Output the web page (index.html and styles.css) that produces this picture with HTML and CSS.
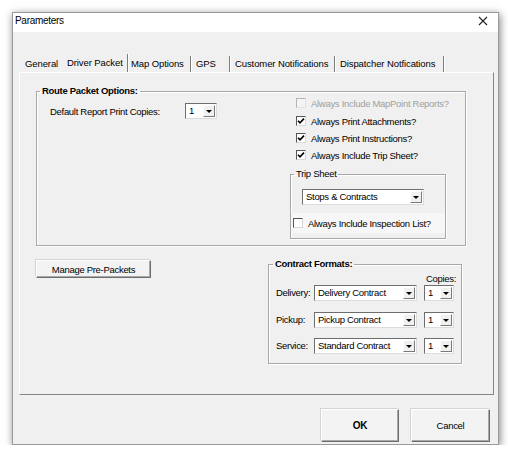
FILE: index.html
```html
<!DOCTYPE html>
<html>
<head>
<meta charset="utf-8">
<title>Parameters</title>
<link rel="stylesheet" href="styles.css">
</head>
<body>
<div class="dialog">
  <div class="titlebar">
    <span class="title">Parameters</span>
    <svg class="close" width="10" height="10" viewBox="0 0 10 10"><path d="M1 1L9 9M9 1L1 9" stroke="#222" stroke-width="1.1" fill="none"/></svg>
  </div>
  <div class="body">
    <div class="tabs">
      <div class="tab t-general">General</div>
      <div class="tab t-driver active">Driver Packet</div>
      <div class="tab t-map">Map Options</div>
      <div class="tab t-gps">GPS</div>
      <div class="tab t-cust">Customer Notifications</div>
      <div class="tab t-disp">Dispatcher Notfications</div>
    </div>
    <div class="page">
      <fieldset class="group route">
        <legend>Route Packet Options:</legend>
        <div class="route-cols">
          <div class="route-left">
            <span class="copies-label">Default Report Print Copies:</span>
            <div class="combo c-num"><span class="combo-text">1</span><span class="combo-btn"><i class="arrow"></i></span></div>
          </div>
          <div class="route-right">
            <div class="chk-row disabled first"><span class="chk"></span><span>Always Include MapPoint Reports?</span></div>
            <div class="chk-row"><span class="chk"><svg width="8" height="8" viewBox="0 0 8 8"><path d="M1 3.8L3 5.9L7 1.6" stroke="#000" stroke-width="1.6" fill="none"/></svg></span><span>Always Print Attachments?</span></div>
            <div class="chk-row"><span class="chk"><svg width="8" height="8" viewBox="0 0 8 8"><path d="M1 3.8L3 5.9L7 1.6" stroke="#000" stroke-width="1.6" fill="none"/></svg></span><span>Always Print Instructions?</span></div>
            <div class="chk-row"><span class="chk"><svg width="8" height="8" viewBox="0 0 8 8"><path d="M1 3.8L3 5.9L7 1.6" stroke="#000" stroke-width="1.6" fill="none"/></svg></span><span>Always Include Trip Sheet?</span></div>
            <fieldset class="group trip">
              <legend>Trip Sheet</legend>
              <div class="combo c-trip"><span class="combo-text">Stops &amp; Contracts</span><span class="combo-btn"><i class="arrow"></i></span></div>
              <div class="chk-row inspect"><span class="chk"></span><span>Always Include Inspection List?</span></div>
            </fieldset>
          </div>
        </div>
      </fieldset>
      <div class="lower">
        <button class="btn manage">Manage Pre-Packets</button>
        <fieldset class="group contract">
          <legend>Contract Formats:</legend>
          <div class="copies-head">Copies:</div>
          <div class="cf-row">
            <span class="cf-label">Delivery:</span>
            <div class="combo c-contract"><span class="combo-text">Delivery Contract</span><span class="combo-btn"><i class="arrow"></i></span></div>
            <div class="combo c-copies"><span class="combo-text">1</span><span class="combo-btn"><i class="arrow"></i></span></div>
          </div>
          <div class="cf-row r2">
            <span class="cf-label">Pickup:</span>
            <div class="combo c-contract"><span class="combo-text">Pickup Contract</span><span class="combo-btn"><i class="arrow"></i></span></div>
            <div class="combo c-copies"><span class="combo-text">1</span><span class="combo-btn"><i class="arrow"></i></span></div>
          </div>
          <div class="cf-row r3">
            <span class="cf-label">Service:</span>
            <div class="combo c-contract"><span class="combo-text">Standard Contract</span><span class="combo-btn"><i class="arrow"></i></span></div>
            <div class="combo c-copies"><span class="combo-text">1</span><span class="combo-btn"><i class="arrow"></i></span></div>
          </div>
        </fieldset>
      </div>
    </div>
    <div class="footer">
      <button class="btn big ok">OK</button>
      <button class="btn big cancel">Cancel</button>
    </div>
  </div>
</div>
</body>
</html>
```

FILE: styles.css
```css
html, body {
  margin: 0;
  padding: 0;
  background: #ffffff;
}
body {
  font-family: "Liberation Sans", Arial, sans-serif;
  font-size: 9.5px;
  letter-spacing: -0.3px;
  color: #000;
  padding: 12px 0 0 12px;
}
.dialog {
  width: 487px;
  height: 433px;
  box-sizing: border-box;
  border: 1px solid #9a9a9a;
  background: #f0f0f0;
  box-shadow: 1px 2px 8px rgba(0, 0, 0, 0.5);
  display: flex;
  flex-direction: column;
}
.titlebar {
  height: 19px;
  background: #ffffff;
  display: flex;
  align-items: flex-start;
  justify-content: space-between;
  padding-left: 2px;
  padding-right: 10px;
}
.title {
  line-height: 15px;
  font-size: 10px;
}
.close {
  margin-top: 3px;
}
.body {
  flex: 1;
  display: flex;
  flex-direction: column;
}
.tabs {
  margin-top: 22px;
  margin-left: 6px;
  height: 18px;
  display: flex;
  align-items: flex-end;
  letter-spacing: -0.1px;
}
.tab {
  height: 16px;
  line-height: 15px;
  box-sizing: border-box;
  padding-left: 5px;
  border-right: 1px solid #7c7c7c;
  box-shadow: 1px 0 0 #ffffff;
  white-space: nowrap;
}
.tab.active {
  height: 18px;
  padding-top: 1px;
}
.t-general { width: 43px; padding-left: 6px; border-right: none; box-shadow: none; }
.t-driver { width: 66px; }
.t-map { width: 63px; padding-left: 3px; }
.t-gps { width: 39px; }
.t-cust { width: 105px; }
.t-disp { width: 109px; }
.page {
  margin-left: 6px;
  width: 475px;
  height: 323px;
  box-sizing: border-box;
  border: 1px solid;
  border-color: #ffffff #858585 #858585 #ffffff;
  padding: 13px 0 0 16px;
}
fieldset.group {
  margin: 0;
  min-width: 0;
  border: 1px solid #a8a8a8;
  box-shadow: 1px 1px 0 #ffffff, inset 1px 1px 0 #ffffff;
}
fieldset.group > legend {
  padding: 0 2px;
  margin-left: 3px;
  line-height: 10px;
  font-weight: bold;
}
fieldset.route > legend {
  margin-left: -10px;
}
fieldset.contract > legend {
  margin-left: -3px;
}
fieldset.trip > legend {
  font-weight: normal;
}
.route {
  width: 430px;
  box-sizing: border-box;
  padding: 0 19px 6px 13px;
}
.route-cols {
  display: flex;
  align-items: flex-start;
}
.route-left {
  width: 240px;
  margin-top: 7px;
  height: 16px;
  display: flex;
  align-items: center;
}
.copies-label {
  width: 135px;
}
.c-num { width: 32px; }
.route-right {
  width: 156px;
  display: flex;
  flex-direction: column;
}
.chk-row {
  height: 14px;
  display: flex;
  align-items: center;
  gap: 5px;
  padding-left: 6px;
  margin-bottom: 3px;
  white-space: nowrap;
}
.chk-row.first {
  margin-bottom: 4px;
}
.chk {
  width: 10px;
  height: 10px;
  box-sizing: border-box;
  background: #ffffff;
  border: 1px solid;
  border-color: #555555 #d8d8d8 #d8d8d8 #555555;
  display: flex;
  align-items: center;
  justify-content: center;
  flex: none;
}
.disabled {
  color: #a0a0a0;
}
.disabled .chk {
  background: #f4f4f4;
  border-color: #b4b4b4 #e2e2e2 #e2e2e2 #b4b4b4;
}
.trip {
  margin-top: 4px !important;
  padding: 0 0 5px 0;
}
.c-trip {
  width: 122px;
  margin: 10px 0 0 11px;
}
.chk-row.inspect {
  height: 20px;
  margin: 8px 0 0 0;
  padding-left: 2px;
  background: #f7f7f7;
}
.combo {
  height: 16px;
  box-sizing: border-box;
  display: flex;
  align-items: center;
  background: #ffffff;
  border: 1px solid;
  border-color: #6e6e6e #dcdcdc #dcdcdc #6e6e6e;
  flex: none;
}
.combo-text {
  flex: 1;
  padding-left: 3px;
  line-height: 14px;
  white-space: nowrap;
  overflow: hidden;
}
.combo-btn {
  width: 12px;
  height: 12px;
  margin-right: 1px;
  box-sizing: border-box;
  background: #f0f0f0;
  border: 1px solid;
  border-color: #ffffff #7a7a7a #7a7a7a #ffffff;
  display: flex;
  align-items: center;
  justify-content: center;
}
.arrow {
  width: 0;
  height: 0;
  border-left: 3px solid transparent;
  border-right: 3px solid transparent;
  border-top: 3px solid #000000;
}
.lower {
  margin-top: 13px;
  width: 430px;
  display: flex;
  justify-content: space-between;
  align-items: flex-start;
}
.btn {
  font-family: inherit;
  font-size: 9.5px;
  letter-spacing: -0.3px;
  color: #000;
  background: #f3f3f3;
  border: 1px solid;
  border-color: #ffffff #6e6e6e #6e6e6e #ffffff;
  box-shadow: inset -1px -1px 0 #a8a8a8, -1px -1px 0 #d4d4d4;
  padding: 0;
  margin: 0;
}
.manage {
  width: 115px;
  height: 18px;
  margin-top: 1px;
}
.contract {
  margin-right: 4px !important;
  padding: 4px 7px 9px 7px;
}
.copies-head {
  height: 12px;
  line-height: 12px;
  text-align: right;
  margin-right: -2px;
}
.cf-row {
  height: 16px;
  display: flex;
  align-items: center;
}
.cf-row.r2 { margin-top: 11px; }
.cf-row.r3 { margin-top: 10px; }
.cf-label {
  width: 38px;
  margin-top: -2px;
}
.c-contract { width: 103px; }
.c-copies { width: 30px; margin-left: 7px; }
.footer {
  margin-top: 14px;
  display: flex;
  justify-content: flex-end;
  gap: 12px;
  padding-right: 8px;
}
.btn.big {
  height: 33px;
}
.ok {
  width: 78px;
  font-weight: bold;
  font-size: 10px;
}
.cancel {
  width: 79px;
}
```
